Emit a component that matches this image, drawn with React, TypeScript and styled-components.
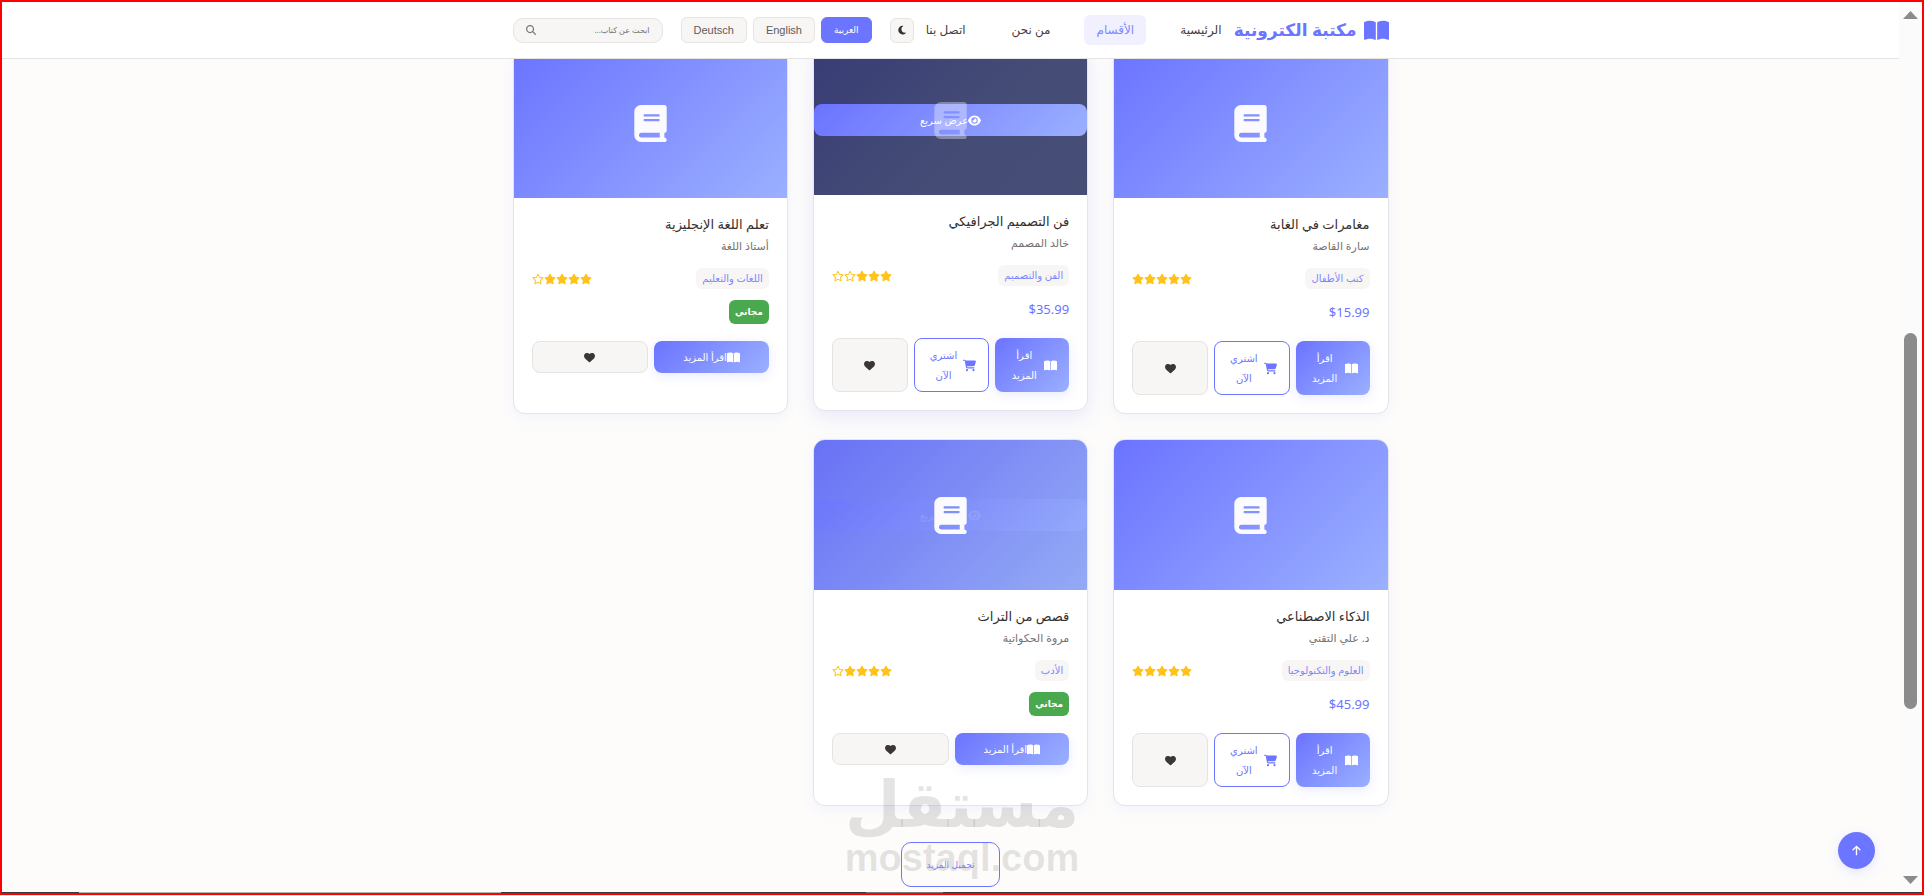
import React from "react";
import styled, { createGlobalStyle, css } from "styled-components";
import {
  FaArrowUp,
  FaBook,
  FaBookOpen,
  FaCartShopping,
  FaEye,
  FaHeart,
  FaMagnifyingGlass,
  FaMoon,
  FaRegStar,
  FaStar,
} from "react-icons/fa6";

const accent = "#6c75ff";
const gradient = "linear-gradient(135deg, #6b73ff 0%, #9bb0ff 100%)";

const GlobalStyle = createGlobalStyle`
  * { box-sizing: border-box; }
  body {
    margin: 0;
    background: #fdfcfb;
    color: #33302e;
    font-family: "Noto Sans", "DejaVu Sans", sans-serif;
    font-size: 12px;
    line-height: 20px;
  }
  button, input { font: inherit; color: inherit; }
  h1, h2, p, ul { margin: 0; padding: 0; }
  svg { display: block; flex: none; }
`;

const Frame = styled.div`
  position: relative;
  display: flex;
  height: 100vh;
  overflow: hidden;
  border: 2px solid #ff0000;
`;

const Page = styled.div`
  position: relative;
  flex: 1;
  min-width: 0;
`;

const Container = styled.div`
  width: 100%;
  max-width: 876px;
  margin: 0 auto;
`;

const Header = styled.header`
  position: absolute;
  top: 0;
  left: 0;
  right: 0;
  z-index: 5;
  background: #ffffff;
  border-bottom: 1px solid #e4e4e4;
`;

const HeaderRow = styled(Container)`
  display: flex;
  align-items: center;
  justify-content: space-between;
  height: 56px;
`;

const Logo = styled.a`
  display: flex;
  align-items: center;
  gap: 7px;
  color: ${accent};
  font-size: 17px;
  font-weight: 700;
  white-space: nowrap;
  text-decoration: none;
`;

const Nav = styled.nav`
  display: flex;
  gap: 22px;
`;

const NavLink = styled.a<{ $active?: boolean }>`
  padding: 5px 12px;
  border-radius: 6px;
  background: ${(p) => (p.$active ? "#f0f0ff" : "transparent")};
  color: ${(p) => (p.$active ? "#8089ff" : "#44403d")};
  font-size: 12px;
  text-align: center;
  text-decoration: none;
  white-space: nowrap;
`;

const Actions = styled.div`
  display: flex;
  align-items: center;
  gap: 18px;
`;

const ThemeButton = styled.button`
  display: grid;
  place-items: center;
  width: 24px;
  height: 25px;
  padding: 0;
  border: 1px solid #e5e4e3;
  border-radius: 6px;
  background: #f7f6f5;
`;

const Languages = styled.div`
  display: flex;
  gap: 6px;
`;

const LangButton = styled.button<{ $active?: boolean }>`
  height: 26px;
  padding: 0 12px;
  border: 1px solid ${(p) => (p.$active ? accent : "#e5e4e3")};
  border-radius: 6px;
  background: ${(p) => (p.$active ? accent : "#f7f6f5")};
  color: ${(p) => (p.$active ? "#ffffff" : "#5f5b58")};
  font-family: "Liberation Sans", "DejaVu Sans", sans-serif;
  font-size: ${(p) => (p.$active ? "9px" : "11px")};
`;

const Search = styled.label`
  display: flex;
  align-items: center;
  width: 150px;
  height: 25px;
  padding: 0 12px;
  border: 1px solid #e5e4e3;
  border-radius: 10px;
  background: #f7f6f5;
  color: #77726f;
`;

const SearchInput = styled.input`
  flex: 1;
  min-width: 0;
  padding: 0;
  border: 0;
  outline: 0;
  background: transparent;
  font-size: 8px;
  &::placeholder { color: #77726f; opacity: 1; }
`;

const Main = styled.main`
  padding-top: 45px;
`;

const Grid = styled(Container)`
  display: grid;
  grid-template-columns: repeat(3, 1fr);
  gap: 25px;
`;

const Card = styled.article<{ $raised?: boolean }>`
  display: flex;
  flex-direction: column;
  overflow: hidden;
  border: 1px solid #e5e4e6;
  border-radius: 12px;
  background: #ffffff;
  box-shadow: ${(p) => (p.$raised ? "0 6px 20px rgba(107,115,255,.14)" : "0 3px 12px rgba(107,115,255,.08)")};
  transform: ${(p) => (p.$raised ? "translateY(-3px)" : "none")};
`;

type OverlayState = "none" | "fading" | "shown";

const Cover = styled.div`
  position: relative;
  display: grid;
  place-items: center;
  height: 150px;
  background: ${gradient};
  color: #ffffff;
`;

const CoverIcon = styled.div<{ $state: OverlayState }>`
  position: relative;
  opacity: ${(p) => (p.$state === "shown" ? 0.35 : 0.97)};
`;

const Overlay = styled.div<{ $state: OverlayState }>`
  position: absolute;
  inset: 0;
  display: flex;
  align-items: center;
  background: ${(p) =>
    p.$state === "shown"
      ? "linear-gradient(135deg, #383c75 0%, #454d76 60%, #464e76 100%)"
      : "rgba(80, 100, 130, 0.08)"};
`;

const buttonBase = css`
  display: flex;
  align-items: center;
  justify-content: center;
  min-height: 32px;
  border-radius: 8px;
  font-size: 10px;
  font-weight: 500;
`;

const QuickView = styled.button<{ $state: OverlayState }>`
  ${buttonBase}
  flex: 1;
  padding: 0;
  border: 0;
  background: ${gradient};
  color: ${(p) => (p.$state === "shown" ? "#ffffff" : "#a3adff")};
  opacity: ${(p) => (p.$state === "shown" ? 1 : 0.5)};
`;

const Body = styled.div`
  display: flex;
  flex-direction: column;
  padding: 15px 18px 18px;
`;

const Title = styled.h2`
  font-size: 13px;
  font-weight: 500;
  line-height: 22px;
`;

const Author = styled.p`
  margin-bottom: 11px;
  color: #76716e;
  font-size: 11px;
  line-height: 22px;
`;

const Meta = styled.div`
  display: flex;
  align-items: center;
  justify-content: space-between;
`;

const Tag = styled.span`
  padding: 0 6px;
  border-radius: 6px;
  background: #f7f6f5;
  color: #7d86ff;
  font-size: 10px;
  line-height: 21px;
`;

const Stars = styled.div`
  display: flex;
  color: #ffc31a;
`;

const PriceRow = styled.div`
  display: flex;
  align-items: center;
  height: 24px;
  margin: 11px 0 17px;
`;

const Price = styled.span`
  color: ${accent};
  font-size: 13px;
`;

const FreeBadge = styled.span`
  padding: 0 6px;
  border-radius: 6px;
  background: #4aa94f;
  color: #ffffff;
  font-size: 9px;
  font-weight: 700;
  line-height: 24px;
`;

const Buttons = styled.div`
  display: flex;
  gap: 6px;
`;

const ActionButton = styled.button<{ $kind: "read" | "buy" | "like"; $wrap?: boolean }>`
  ${buttonBase}
  flex: 1 1 0;
  min-width: 0;
  min-height: ${(p) => (p.$wrap ? 54 : 32)}px;
  padding: 0 12px;
  gap: ${(p) => (p.$wrap ? 3 : 0)}px;
  ${(p) =>
    p.$kind === "read" &&
    css`
      border: 0;
      background: ${gradient};
      color: #ffffff;
      box-shadow: 0 3px 12px rgba(107, 115, 255, 0.14);
    `}
  ${(p) =>
    p.$kind === "buy" &&
    css`
      border: 1px solid ${accent};
      background: #ffffff;
      color: ${accent};
    `}
  ${(p) =>
    p.$kind === "like" &&
    css`
      border: 1px solid #e5e4e3;
      background: #f7f6f5;
      color: #3c3734;
    `}
`;

const MoreRow = styled.div`
  display: flex;
  justify-content: center;
  margin-top: 36px;
`;

const MoreButton = styled.button`
  height: 45px;
  padding: 0 24px;
  border: 1px solid ${accent};
  border-radius: 10px;
  background: transparent;
  color: #8089ff;
  font-size: 9px;
`;

const ToTop = styled.button`
  position: absolute;
  right: 24px;
  bottom: 24px;
  display: grid;
  place-items: center;
  width: 37px;
  height: 37px;
  padding: 0;
  border: 0;
  border-radius: 50%;
  background: ${accent};
  color: #ffffff;
  box-shadow: 0 3px 12px rgba(107, 115, 255, 0.16);
`;

const Watermark = styled.div`
  position: absolute;
  left: 50%;
  bottom: 14px;
  z-index: 3;
  display: flex;
  flex-direction: column;
  align-items: center;
  transform: translateX(-50%);
  color: rgba(90, 90, 90, 0.16);
  font-family: "Liberation Sans", "DejaVu Sans", sans-serif;
  font-weight: 700;
  pointer-events: none;
`;

const WatermarkName = styled.span`
  font-size: 64px;
  line-height: 64px;
`;

const WatermarkSite = styled.span`
  font-size: 38px;
  line-height: 42px;
`;

const ScrollTrack = styled.div`
  display: flex;
  flex-direction: column;
  align-items: center;
  width: 23px;
  padding: 9px 0;
  background: #fbfbfb;
  color: #8b8b8b;
`;

const ScrollSpace = styled.div<{ $grow: number }>`
  flex: ${(p) => p.$grow} 1 0;
`;

const ScrollThumb = styled.div`
  flex: 375 1 0;
  width: 13px;
  border-radius: 7px;
  background: #8b8b8b;
`;

const EdgeStrip = styled.div`
  position: absolute;
  left: 0;
  right: 0;
  bottom: 0;
  height: 1px;
  background: linear-gradient(
    90deg,
    #3a3a3a 0 4%,
    #b5b5b0 4% 26%,
    #3a3a3a 26% 45%,
    #777777 45% 49%,
    #3a3a3a 49% 100%
  );
`;

interface Book {
  title: string;
  author: string;
  category: string;
  stars: number;
  price?: string;
  overlay: OverlayState;
}

const books: Book[] = [
  { title: "مغامرات في الغابة", author: "سارة القاصة", category: "كتب الأطفال", stars: 5, price: "$15.99", overlay: "none" },
  { title: "فن التصميم الجرافيكي", author: "خالد المصمم", category: "الفن والتصميم", stars: 3, price: "$35.99", overlay: "shown" },
  { title: "تعلم اللغة الإنجليزية", author: "أستاذ اللغة", category: "اللغات والتعليم", stars: 4, overlay: "none" },
  { title: "الذكاء الاصطناعي", author: "د. علي التقني", category: "العلوم والتكنولوجيا", stars: 5, price: "$45.99", overlay: "none" },
  { title: "قصص من التراث", author: "مروة الحكواتية", category: "الأدب", stars: 4, overlay: "fading" },
];

function BookCard({ book }: { book: Book }) {
  const paid = Boolean(book.price);
  return (
    <Card $raised={book.overlay === "shown"}>
      <Cover>
        {book.overlay !== "none" && (
          <Overlay $state={book.overlay}>
            <QuickView type="button" $state={book.overlay}>
              <FaEye size={13} />
              عرض سريع
            </QuickView>
          </Overlay>
        )}
        <CoverIcon $state={book.overlay}>
          <FaBook size={37} />
        </CoverIcon>
      </Cover>
      <Body>
        <Title>{book.title}</Title>
        <Author>{book.author}</Author>
        <Meta>
          <Tag>{book.category}</Tag>
          <Stars role="img" aria-label={`${book.stars} / 5`}>
            {[1, 2, 3, 4, 5].map((n) => (n <= book.stars ? <FaStar key={n} size={12} /> : <FaRegStar key={n} size={12} />))}
          </Stars>
        </Meta>
        <PriceRow>{paid ? <Price dir="ltr">{book.price}</Price> : <FreeBadge>مجاني</FreeBadge>}</PriceRow>
        <Buttons>
          <ActionButton type="button" $kind="read" $wrap={paid}>
            <FaBookOpen size={13} />
            <span>اقرأ المزيد</span>
          </ActionButton>
          {paid && (
            <ActionButton type="button" $kind="buy" $wrap>
              <FaCartShopping size={13} />
              <span>اشتري الآن</span>
            </ActionButton>
          )}
          <ActionButton type="button" $kind="like" $wrap={paid} aria-label="المفضلة">
            <FaHeart size={11} />
          </ActionButton>
        </Buttons>
      </Body>
    </Card>
  );
}

export default function App() {
  return (
    <Frame>
      <GlobalStyle />
      <Page dir="rtl" lang="ar">
        <Header>
          <HeaderRow>
            <Logo href="#home">
              <FaBookOpen size={25} />
              مكتبة الكترونية
            </Logo>
            <Nav>
              <NavLink href="#home">الرئيسية</NavLink>
              <NavLink href="#categories" $active>الأقسام</NavLink>
              <NavLink href="#about">من نحن</NavLink>
              <NavLink href="#contact">اتصل بنا</NavLink>
            </Nav>
            <Actions>
              <ThemeButton type="button" aria-label="الوضع الداكن">
                <FaMoon size={10} />
              </ThemeButton>
              <Languages>
                <LangButton type="button" $active>العربية</LangButton>
                <LangButton type="button">English</LangButton>
                <LangButton type="button">Deutsch</LangButton>
              </Languages>
              <Search>
                <SearchInput type="text" placeholder="ابحث عن كتاب..." aria-label="ابحث عن كتاب" />
                <FaMagnifyingGlass size={10} />
              </Search>
            </Actions>
          </HeaderRow>
        </Header>
        <Main>
          <Grid>
            {books.map((book) => (
              <BookCard key={book.title} book={book} />
            ))}
          </Grid>
          <MoreRow>
            <MoreButton type="button">تحميل المزيد</MoreButton>
          </MoreRow>
        </Main>
        <ToTop type="button" aria-label="إلى الأعلى">
          <FaArrowUp size={11} />
        </ToTop>
      </Page>
      <ScrollTrack>
        <svg width="15" height="8" viewBox="0 0 15 8"><path d="M0 8L7.500 0L15 8Z" fill="currentColor" /></svg>
        <ScrollSpace $grow={313} />
        <ScrollThumb />
        <ScrollSpace $grow={166} />
        <svg width="15" height="8" viewBox="0 0 15 8"><path d="M0 0L7.500 8L15 0Z" fill="currentColor" /></svg>
      </ScrollTrack>
      <Watermark>
        <WatermarkName lang="ar">مستقل</WatermarkName>
        <WatermarkSite>mostaql.com</WatermarkSite>
      </Watermark>
      <EdgeStrip />
    </Frame>
  );
}
